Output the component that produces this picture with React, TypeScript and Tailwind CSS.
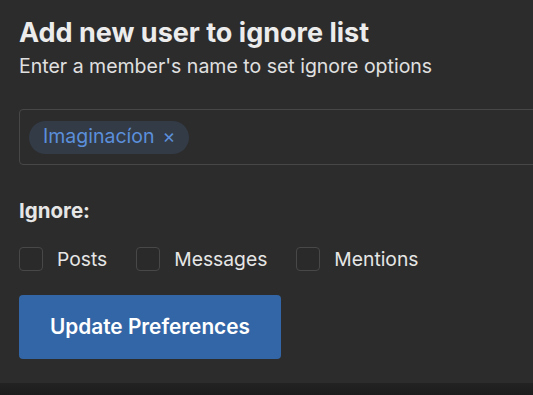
import React from "react";

function Check({ label }: { label: string }) {
  return (
    <label className="flex items-center gap-[14px] h-[24px]">
      <span className="w-[24px] h-[24px] rounded-[4px] border border-[#484848] bg-[#2a2a2a]" />
      <span className="text-[19.3px] leading-[28px] text-[#e6e6e6]">{label}</span>
    </label>
  );
}

export default function App() {
  return (
    <div
      className="w-[533px] h-[395px] bg-[#2c2c2c] overflow-hidden flex flex-col"
      style={{ fontFamily: "Inter, 'Noto Sans', sans-serif" }}
    >
      <div className="flex-1 pl-[19px] pt-[15px]">
        <h1 className="text-[27px] leading-[36px] font-bold text-[#ececec]">Add new user to ignore list</h1>
        <p className="text-[19.5px] leading-[24px] text-[#e0e0e0] mt-[3px]">Enter a member's name to set ignore options</p>
        <div className="mt-[31px] h-[56px] w-[600px] border border-[#474747] rounded-[4px] flex items-center pl-[9px]">
          <span className="h-[33px] px-[14px] rounded-full bg-[#333b47] flex items-center gap-[8px] text-[19.5px] text-[#5b8fdb]">
            Imaginacíon <span>×</span>
          </span>
        </div>
        <div className="mt-[32px] text-[20.5px] leading-[28px] font-bold text-[#e6e6e6]">Ignore:</div>
        <div className="mt-[22px] flex items-center gap-[29px]">
          <Check label="Posts" />
          <Check label="Messages" />
          <Check label="Mentions" />
        </div>
        <button className="mt-[24px] w-[262px] h-[64px] rounded-[4px] bg-[#3366a6] text-white text-[20.8px] font-semibold">
          Update Preferences
        </button>
      </div>
      <div className="h-[12px] bg-gradient-to-b from-[#222] to-[#1c1c1c]" />
    </div>
  );
}
